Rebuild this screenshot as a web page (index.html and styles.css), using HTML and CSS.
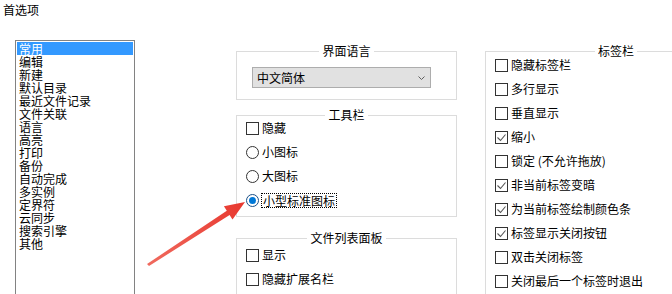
FILE: index.html
```html
<!DOCTYPE html>
<html lang="zh-CN">
<head>
<meta charset="utf-8">
<title>首选项</title>
<link rel="stylesheet" href="styles.css">
</head>
<body>
<div class="title">首选项</div>
<div class="main">
  <ul class="listbox">
    <li class="sel">常用</li>
    <li>编辑</li>
    <li>新建</li>
    <li>默认目录</li>
    <li>最近文件记录</li>
    <li>文件关联</li>
    <li>语言</li>
    <li>高亮</li>
    <li>打印</li>
    <li>备份</li>
    <li>自动完成</li>
    <li>多实例</li>
    <li>定界符</li>
    <li>云同步</li>
    <li>搜索引擎</li>
    <li>其他</li>
  </ul>
  <div class="col mid">
    <div class="group g-lang">
      <div class="legend">界面语言</div>
      <div class="select">
        <span>中文简体</span>
        <svg class="chev" width="7" height="4" viewBox="0 0 7 4"><polyline points="0.5,0.5 3.5,3.5 6.5,0.5" fill="none" stroke="#606060" stroke-width="1"/></svg>
      </div>
    </div>
    <div class="group g-toolbar">
      <div class="legend">工具栏</div>
      <div class="opt"><span class="cb"></span><span>隐藏</span></div>
      <div class="opt"><span class="rb"></span><span>小图标</span></div>
      <div class="opt"><span class="rb"></span><span>大图标</span></div>
      <div class="opt"><span class="rb on"></span><span class="focus">小型标准图标</span></div>
    </div>
    <div class="group g-files">
      <div class="legend">文件列表面板</div>
      <div class="rows">
        <div class="opt"><span class="cb"></span><span>显示</span></div>
        <div class="opt"><span class="cb"></span><span>隐藏扩展名栏</span></div>
      </div>
    </div>
  </div>
  <div class="col right">
    <div class="group g-tabs">
      <div class="legend">标签栏</div>
      <div class="rows">
        <div class="opt"><span class="cb"></span><span>隐藏标签栏</span></div>
        <div class="opt"><span class="cb"></span><span>多行显示</span></div>
        <div class="opt"><span class="cb"></span><span>垂直显示</span></div>
        <div class="opt"><span class="cb on"><svg width="11" height="11" viewBox="0 0 11 11"><polyline points="1.5,5.5 4.5,8.5 9.5,2.5" fill="none" stroke="#555" stroke-width="1.1"/></svg></span><span>缩小</span></div>
        <div class="opt"><span class="cb"></span><span>锁定 (不允许拖放)</span></div>
        <div class="opt"><span class="cb on"><svg width="11" height="11" viewBox="0 0 11 11"><polyline points="1.5,5.5 4.5,8.5 9.5,2.5" fill="none" stroke="#555" stroke-width="1.1"/></svg></span><span>非当前标签变暗</span></div>
        <div class="opt"><span class="cb on"><svg width="11" height="11" viewBox="0 0 11 11"><polyline points="1.5,5.5 4.5,8.5 9.5,2.5" fill="none" stroke="#555" stroke-width="1.1"/></svg></span><span>为当前标签绘制颜色条</span></div>
        <div class="opt"><span class="cb on"><svg width="11" height="11" viewBox="0 0 11 11"><polyline points="1.5,5.5 4.5,8.5 9.5,2.5" fill="none" stroke="#555" stroke-width="1.1"/></svg></span><span>标签显示关闭按钮</span></div>
        <div class="opt"><span class="cb"></span><span>双击关闭标签</span></div>
        <div class="opt"><span class="cb"></span><span>关闭最后一个标签时退出</span></div>
      </div>
    </div>
  </div>
</div>
<svg class="arrow" width="672" height="294" viewBox="0 0 672 294">
  <defs>
    <linearGradient id="ag" x1="148" y1="265" x2="245" y2="202" gradientUnits="userSpaceOnUse">
      <stop offset="0" stop-color="#f06a5e"/>
      <stop offset="1" stop-color="#e8382f"/>
    </linearGradient>
  </defs>
  <polygon points="147,264 226.8,210.8 223.9,206.2 245,202 232.5,219.6 229.6,215 149,266" fill="url(#ag)"/>
</svg>
</body>
</html>
```
FILE: styles.css
```css
* {
  box-sizing: border-box;
}

body {
  margin: 0;
  width: 672px;
  height: 294px;
  overflow: hidden;
  position: relative;
  background: #fff;
  color: #000;
  font-family: "Noto Sans CJK SC", "Microsoft YaHei", sans-serif;
  font-size: 12px;
}

.title {
  height: 40px;
  padding: 2px 0 0 3px;
  line-height: 16px;
}

.main {
  display: flex;
  align-items: flex-start;
}

.listbox {
  margin: 0 0 0 15px;
  padding: 1px;
  list-style: none;
  width: 120px;
  height: 270px;
  flex: none;
  border: 1px solid #828282;
  line-height: 13px;
}

.listbox li {
  height: 13px;
  padding-left: 2px;
  white-space: nowrap;
}

.listbox .sel {
  background: #3399ff;
  color: #fff;
}

.col {
  flex: none;
  padding-top: 11px;
}

.mid {
  margin-left: 101px;
  width: 221px;
}

.right {
  margin-left: 28px;
  width: 262px;
}

.group {
  border: 1px solid #dcdcdc;
  display: flex;
  flex-direction: column;
}

.legend {
  align-self: center;
  margin: -8px 0 -6px;
  padding: 0 3px;
  background: #fff;
  line-height: 14px;
  white-space: nowrap;
}

.g-lang {
  padding-bottom: 11px;
}

.select {
  margin: 15px 0 0 15px;
  width: 179px;
  height: 21px;
  display: flex;
  align-items: center;
  justify-content: space-between;
  padding: 0 5px 0 4px;
  background: #e1e1e1;
  border: 1px solid #adadad;
}

.chev {
  display: block;
}

.g-toolbar {
  margin-top: 15px;
  padding-bottom: 4px;
}

.g-files {
  margin-top: 21px;
  height: 80px;
}

.g-files .rows {
  padding-top: 4px;
}

.g-tabs {
  height: 260px;
}

.g-tabs .rows {
  padding-top: 1px;
}

.opt {
  display: flex;
  align-items: center;
  gap: 3px;
  height: 24px;
  padding-left: 9px;
  white-space: nowrap;
  line-height: 14px;
}

.cb {
  flex: none;
  width: 13px;
  height: 13px;
  border: 1px solid #333;
  background: #fff;
  display: flex;
  align-items: center;
  justify-content: center;
}

.cb svg {
  display: block;
}

.rb {
  flex: none;
  width: 13px;
  height: 13px;
  border: 1px solid #333;
  border-radius: 50%;
  background: #fff;
  display: flex;
  align-items: center;
  justify-content: center;
}

.rb.on {
  border-color: #1b4f86;
}

.rb.on::after {
  content: "";
  width: 7px;
  height: 7px;
  border-radius: 50%;
  background: #0078d7;
}

.focus {
  margin-left: -1px;
  padding: 0 1px;
  border: 1px dotted #000;
  line-height: 13px;
}

.arrow {
  position: absolute;
  left: 0;
  top: 0;
  pointer-events: none;
}
```
